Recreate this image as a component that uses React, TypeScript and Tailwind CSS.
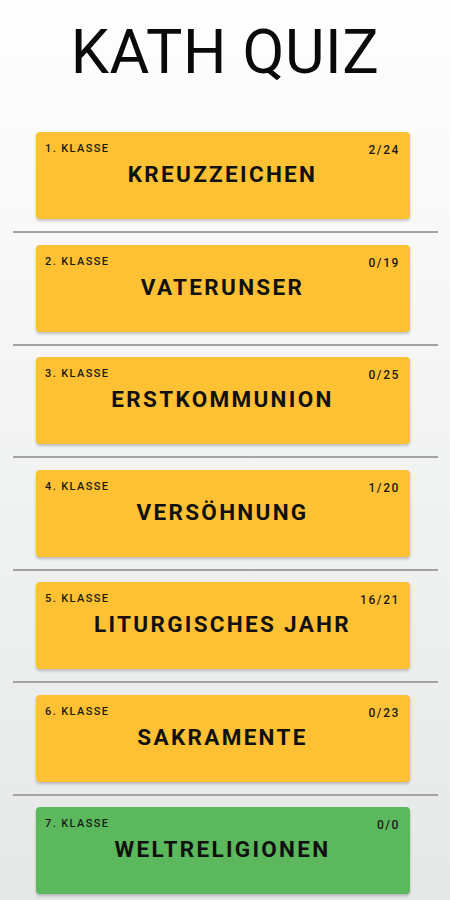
import React from "react";

const items = [
  { k: "1. KLASSE", t: "KREUZZEICHEN", c: "2/24", green: false },
  { k: "2. KLASSE", t: "VATERUNSER", c: "0/19", green: false },
  { k: "3. KLASSE", t: "ERSTKOMMUNION", c: "0/25", green: false },
  { k: "4. KLASSE", t: "VERSÖHNUNG", c: "1/20", green: false },
  { k: "5. KLASSE", t: "LITURGISCHES JAHR", c: "16/21", green: false },
  { k: "6. KLASSE", t: "SAKRAMENTE", c: "0/23", green: false },
  { k: "7. KLASSE", t: "WELTRELIGIONEN", c: "0/0", green: true },
];

export default function App() {
  return (
    <div
      className="h-[900px] w-[450px] overflow-hidden bg-gradient-to-b from-[#fefefe] to-[#e6e8e8] text-[#111]"
      style={{ fontFamily: "Roboto, 'Noto Sans', sans-serif" }}
    >
      <div className="flex h-[132px] justify-center pt-[14px]">
        <h1 className="text-[61px] font-normal leading-[76px] tracking-[0.5px] text-[#0a0a0a]">KATH QUIZ</h1>
      </div>
      <div className="flex flex-col">
        {items.map((it, i) => (
          <div key={i} className="flex flex-col">
            <div
              className={`ml-[36px] mr-[40px] h-[87px] rounded-[4px] pl-[9px] pr-[10px] pt-[10px] shadow-[0_2px_3px_rgba(0,0,0,0.22)] ${
                it.green ? "bg-[#5cb85c]" : "bg-[#fec133]"
              }`}
            >
              <div className="flex items-start justify-between">
                <span className="text-[11px] font-medium leading-[13px] tracking-[1.4px] text-[#1a1a1a]">{it.k}</span>
                <span className="pt-[2px] text-[12px] font-medium leading-[13px] tracking-[1.6px] text-[#1a1a1a]">{it.c}</span>
              </div>
              <div className="mt-[4px] text-center text-[22.5px] font-bold leading-[26px] tracking-[2.3px] text-[#111]">
                {it.t}
              </div>
            </div>
            {i < items.length - 1 && (
              <div className="ml-[13px] mr-[12px] mb-[11.5px] mt-[12px] h-[2px] bg-[#a3a3a3]" />
            )}
          </div>
        ))}
      </div>
    </div>
  );
}
